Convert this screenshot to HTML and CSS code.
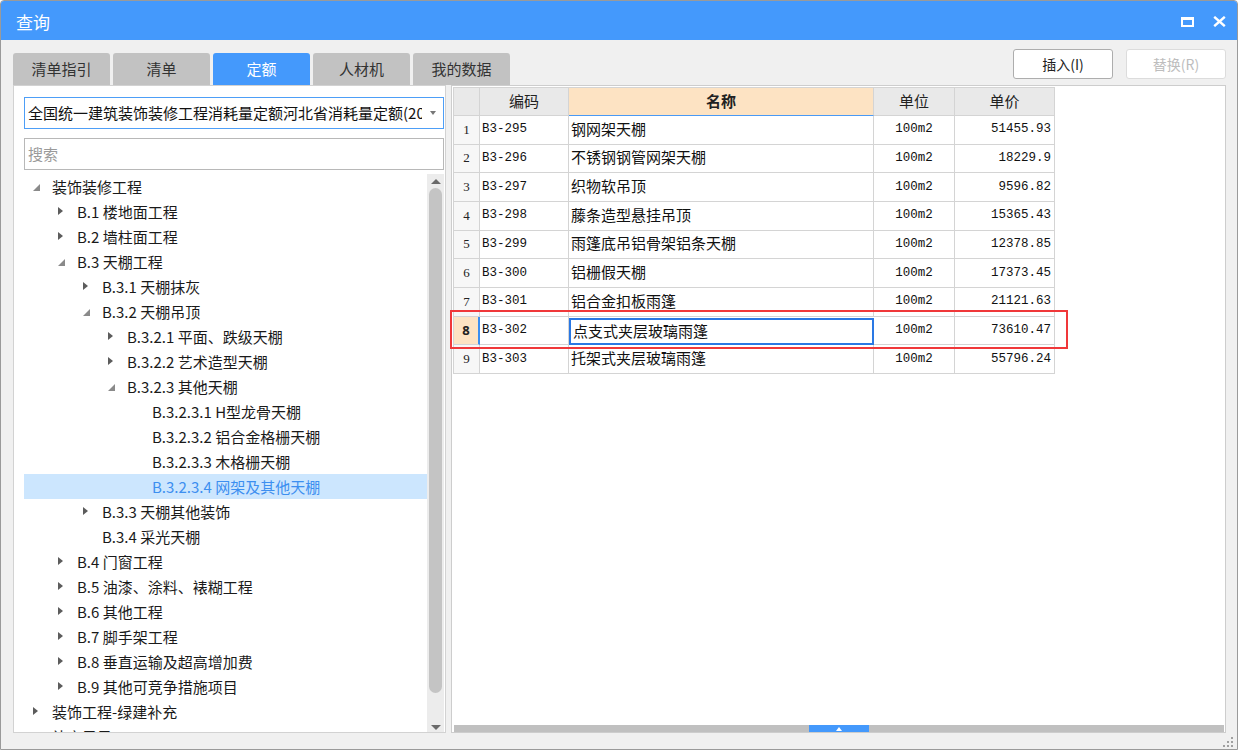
FILE: index.html
```html
<!DOCTYPE html>
<html>
<head>
<meta charset="utf-8">
<title>查询</title>
<link rel="stylesheet" href="styles.css">
</head>
<body>
<div class="window">
  <div class="titlebar">
    <span class="title">查询</span>
    <div class="win-ctrls">
      <svg class="ic-max" width="13" height="10" viewBox="0 0 13 10"><rect x="1" y="1.5" width="11" height="7.5" fill="none" stroke="#fff" stroke-width="2"/><rect x="0" y="0" width="13" height="3" fill="#fff"/></svg>
      <svg class="ic-close" width="13" height="11" viewBox="0 0 13 11"><path d="M1.2 0.8 L11.8 10.2 M11.8 0.8 L1.2 10.2" stroke="#fff" stroke-width="2.4" fill="none"/></svg>
    </div>
  </div>

  <div class="toolbar">
    <div class="tabs">
      <div class="tab">清单指引</div>
      <div class="tab">清单</div>
      <div class="tab active">定额</div>
      <div class="tab">人材机</div>
      <div class="tab">我的数据</div>
    </div>
    <div class="actions">
      <div class="btn">插入(I)</div>
      <div class="btn disabled">替换(R)</div>
    </div>
  </div>

  <div class="content">
    <div class="left">
      <div class="select"><span class="select-text">全国统一建筑装饰装修工程消耗量定额河北省消耗量定额(2012)</span><span class="caret"></span></div>
      <div class="search">搜索</div>
      <div class="tree-wrap">
        <div class="tree">
          <div class="node l0"><span class="tw exp"></span>装饰装修工程</div>
          <div class="node l1"><span class="tw col"></span>B.1 楼地面工程</div>
          <div class="node l1"><span class="tw col"></span>B.2 墙柱面工程</div>
          <div class="node l1"><span class="tw exp"></span>B.3 天棚工程</div>
          <div class="node l2"><span class="tw col"></span>B.3.1 天棚抹灰</div>
          <div class="node l2"><span class="tw exp"></span>B.3.2 天棚吊顶</div>
          <div class="node l3"><span class="tw col"></span>B.3.2.1 平面、跌级天棚</div>
          <div class="node l3"><span class="tw col"></span>B.3.2.2 艺术造型天棚</div>
          <div class="node l3"><span class="tw exp"></span>B.3.2.3 其他天棚</div>
          <div class="node l4"><span class="tw"></span>B.3.2.3.1 H型龙骨天棚</div>
          <div class="node l4"><span class="tw"></span>B.3.2.3.2 铝合金格栅天棚</div>
          <div class="node l4"><span class="tw"></span>B.3.2.3.3 木格栅天棚</div>
          <div class="node l4 selected"><span class="tw"></span>B.3.2.3.4 网架及其他天棚</div>
          <div class="node l2"><span class="tw col"></span>B.3.3 天棚其他装饰</div>
          <div class="node l2"><span class="tw"></span>B.3.4 采光天棚</div>
          <div class="node l1"><span class="tw col"></span>B.4 门窗工程</div>
          <div class="node l1"><span class="tw col"></span>B.5 油漆、涂料、裱糊工程</div>
          <div class="node l1"><span class="tw col"></span>B.6 其他工程</div>
          <div class="node l1"><span class="tw col"></span>B.7 脚手架工程</div>
          <div class="node l1"><span class="tw col"></span>B.8 垂直运输及超高增加费</div>
          <div class="node l1"><span class="tw col"></span>B.9 其他可竞争措施项目</div>
          <div class="node l0"><span class="tw col"></span>装饰工程-绿建补充</div>
          <div class="node l0"><span class="tw"></span>补充子目</div>
        </div>
        <div class="vscroll">
          <span class="arr up"></span>
          <div class="vthumb"></div>
          <span class="arr down"></span>
        </div>
      </div>
    </div>

    <div class="right">
      <div class="grid">
        <div class="row head">
          <div class="c num"></div>
          <div class="c code">编码</div>
          <div class="c name active">名称</div>
          <div class="c unit">单位</div>
          <div class="c price">单价</div>
        </div>
        <div class="row"><div class="c num">1</div><div class="c code">B3-295</div><div class="c name">钢网架天棚</div><div class="c unit">100m2</div><div class="c price">51455.93</div></div>
        <div class="row"><div class="c num">2</div><div class="c code">B3-296</div><div class="c name">不锈钢钢管网架天棚</div><div class="c unit">100m2</div><div class="c price">18229.9</div></div>
        <div class="row"><div class="c num">3</div><div class="c code">B3-297</div><div class="c name">织物软吊顶</div><div class="c unit">100m2</div><div class="c price">9596.82</div></div>
        <div class="row"><div class="c num">4</div><div class="c code">B3-298</div><div class="c name">藤条造型悬挂吊顶</div><div class="c unit">100m2</div><div class="c price">15365.43</div></div>
        <div class="row"><div class="c num">5</div><div class="c code">B3-299</div><div class="c name">雨篷底吊铝骨架铝条天棚</div><div class="c unit">100m2</div><div class="c price">12378.85</div></div>
        <div class="row"><div class="c num">6</div><div class="c code">B3-300</div><div class="c name">铝栅假天棚</div><div class="c unit">100m2</div><div class="c price">17373.45</div></div>
        <div class="row"><div class="c num">7</div><div class="c code">B3-301</div><div class="c name">铝合金扣板雨篷</div><div class="c unit">100m2</div><div class="c price">21121.63</div></div>
        <div class="row current"><div class="c num">8</div><div class="c code">B3-302</div><div class="c name focus">点支式夹层玻璃雨篷</div><div class="c unit">100m2</div><div class="c price">73610.47</div></div>
        <div class="row"><div class="c num">9</div><div class="c code">B3-303</div><div class="c name">托架式夹层玻璃雨篷</div><div class="c unit">100m2</div><div class="c price">55796.24</div></div>
      </div>
      <div class="hscroll"><div class="hthumb"><span class="hup"></span></div></div>
      <div class="highlight"></div>
    </div>
  </div>

  <div class="statusbar">
    <svg class="grip" width="10" height="10" viewBox="0 0 10 10">
      <rect x="8" y="0" width="2" height="2" fill="#a0a0a0"/>
      <rect x="4" y="4" width="2" height="2" fill="#a0a0a0"/><rect x="8" y="4" width="2" height="2" fill="#a0a0a0"/>
      <rect x="0" y="8" width="2" height="2" fill="#a0a0a0"/><rect x="4" y="8" width="2" height="2" fill="#a0a0a0"/><rect x="8" y="8" width="2" height="2" fill="#a0a0a0"/>
    </svg>
  </div>
</div>
</body>
</html>
```

FILE: styles.css
```css
* { box-sizing: border-box; }
html, body { margin: 0; padding: 0; }
body {
  width: 1238px;
  height: 750px;
  overflow: hidden;
  background: #ffffff;
  font-family: "Noto Sans CJK SC", "Noto Sans", sans-serif;
  color: #1a1a1a;
}
.window {
  width: 1238px;
  height: 750px;
  border: 1px solid #9a9a9a;
  border-radius: 4px 4px 0 0;
  background: #f0f0f0;
  display: flex;
  flex-direction: column;
  overflow: hidden;
}
.titlebar {
  height: 39px;
  flex: none;
  background: #4499fc;
  display: flex;
  align-items: center;
  padding: 0 11px 0 15px;
}
.title {
  color: #ffffff;
  font-size: 17px;
  line-height: 20px;
  margin-top: 2px;
}
.win-ctrls {
  margin-left: auto;
  display: flex;
  align-items: center;
  gap: 19px;
  margin-top: 2px;
}
.ic-max, .ic-close { display: block; }

.toolbar {
  flex: none;
  height: 36px;
  margin-top: 9px;
  padding: 0 11px 0 12px;
  display: flex;
  justify-content: space-between;
}
.tabs {
  display: flex;
  align-items: flex-end;
  gap: 3px;
}
.tab {
  width: 97px;
  height: 32px;
  background: #c2c2c2;
  border-radius: 3px 3px 0 0;
  color: #333333;
  font-size: 15px;
  line-height: 32px;
  text-align: center;
}
.tab.active {
  background: #4499fc;
  color: #ffffff;
}
.actions {
  display: flex;
  gap: 13px;
  align-items: flex-start;
}
.btn {
  width: 100px;
  height: 30px;
  border: 1px solid #adadad;
  border-radius: 3px;
  background: #ffffff;
  font-size: 14px;
  line-height: 28px;
  text-align: center;
  color: #222222;
}
.btn.disabled {
  border-color: #dcdcdc;
  color: #bdbdbd;
}

.content {
  flex: none;
  height: 648px;
  padding: 0 11px 0 12px;
  display: flex;
  gap: 5px;
}
.left {
  width: 433px;
  height: 648px;
  background: #ffffff;
  border: 1px solid #d2d2d2;
  padding: 11px 1px 0 10px;
  display: flex;
  flex-direction: column;
}
.select {
  height: 32px;
  border: 1px solid #4d9ef7;
  display: flex;
  align-items: center;
  padding-left: 3px;
  flex: none;
  overflow: hidden;
}
.select-text {
  font-size: 15px;
  line-height: 20px;
  white-space: nowrap;
  overflow: hidden;
  width: 394px;
  color: #111111;
}
.caret {
  margin-left: 8px;
  width: 0;
  height: 0;
  border-left: 3.5px solid transparent;
  border-right: 3.5px solid transparent;
  border-top: 4px solid #777777;
}
.search {
  flex: none;
  margin-top: 9px;
  height: 32px;
  border: 1px solid #b8b8b8;
  padding-left: 3px;
  font-size: 15px;
  line-height: 30px;
  color: #9a9a9a;
}
.tree-wrap {
  margin-top: 4px;
  flex: 1;
  display: flex;
  overflow: hidden;
}
.tree {
  width: 403px;
  overflow: hidden;
}
.node {
  height: 25px;
  display: flex;
  align-items: center;
  font-size: 15px;
  line-height: 25px;
  white-space: nowrap;
  color: #1a1a1a;
}
.node.selected {
  background: #cce6fe;
  color: #3d8ff0;
}
.l0 { padding-left: 8px; }
.l1 { padding-left: 33px; }
.l2 { padding-left: 58px; }
.l3 { padding-left: 83px; }
.l4 { padding-left: 108px; }
.tw {
  width: 20px;
  height: 25px;
  flex: none;
  position: relative;
}
.tw.col::before {
  content: "";
  position: absolute;
  left: 1px;
  top: 8px;
  border-top: 4.5px solid transparent;
  border-bottom: 4.5px solid transparent;
  border-left: 5px solid #5c5c5c;
}
.tw.exp::before {
  content: "";
  position: absolute;
  left: 1px;
  top: 10px;
  border-left: 7px solid transparent;
  border-bottom: 7px solid #8a8a8a;
}
.vscroll {
  width: 17px;
  background: #ececec;
  display: flex;
  flex-direction: column;
  align-items: center;
  padding-top: 5px;
}
.arr {
  width: 0;
  height: 0;
  border-left: 5px solid transparent;
  border-right: 5px solid transparent;
  flex: none;
}
.arr.up { border-bottom: 5px solid #6a6a6a; }
.arr.down { border-top: 5px solid #6a6a6a; margin-top: 32px; }
.vthumb {
  margin-top: 4px;
  width: 13px;
  height: 505px;
  border-radius: 7px;
  background: #c4c4c4;
}

.right {
  width: 775px;
  height: 648px;
  background: #ffffff;
  border: 1px solid #cdcdcd;
  padding: 1px 1px 0 1px;
  display: flex;
  flex-direction: column;
  position: relative;
}
.grid {
  width: 602px;
  border-left: 1px solid #d4d4d4;
  border-top: 1px solid #d4d4d4;
}
.row {
  display: flex;
  height: 28.67px;
}
.row.head { height: 28px; }
.c {
  border-right: 1px solid #d4d4d4;
  border-bottom: 1px solid #d4d4d4;
  height: 100%;
  display: flex;
  align-items: center;
  white-space: nowrap;
  overflow: hidden;
}
.num {
  width: 26px;
  justify-content: center;
  background: #f7f7f7;
  font-family: "Liberation Serif", serif;
  font-size: 13px;
  color: #222222;
}
.code {
  width: 89px;
  padding-left: 2px;
  padding-bottom: 1px;
  font-family: "Liberation Mono", monospace;
  font-size: 12.5px;
  color: #111111;
}
.name {
  width: 305px;
  padding-left: 2px;
  padding-bottom: 3px;
  font-size: 15px;
  color: #111111;
}
.unit {
  width: 81px;
  justify-content: center;
  padding-bottom: 1px;
  font-family: "Liberation Mono", monospace;
  font-size: 12.5px;
  color: #111111;
}
.price {
  width: 100px;
  justify-content: flex-end;
  padding-right: 3px;
  padding-bottom: 1px;
  font-family: "Liberation Mono", monospace;
  font-size: 12.5px;
  color: #111111;
}
.head .c {
  background: #e9e9e9;
  justify-content: center;
  font-family: "Noto Sans CJK SC", sans-serif;
  font-size: 15px;
  color: #222222;
  padding: 0 0 2px 0;
}
.head .name.active {
  background: #fde3c3;
  font-weight: bold;
  border-bottom: 1px solid #4a9af5;
}
.current .num {
  background: #fde3c3;
  font-weight: bold;
  font-family: "Noto Sans", sans-serif;
  font-size: 13px;
  border-right: 2px solid #3a8ef0;
}
.name.focus {
  border: 2px solid #2a78e4;
  margin-top: 1px;
  padding-bottom: 2px;
  height: calc(100% - 1px);
}
.hscroll {
  margin-top: auto;
  margin-left: 1px;
  height: 7px;
  background: #c0c0c0;
  position: relative;
}
.hthumb {
  position: absolute;
  left: 355px;
  top: 0;
  width: 60px;
  height: 7px;
  background: #4499fc;
  display: flex;
  justify-content: center;
  align-items: center;
}
.hup {
  width: 0;
  height: 0;
  border-left: 3px solid transparent;
  border-right: 3px solid transparent;
  border-bottom: 4px solid #ffffff;
}
.highlight {
  position: absolute;
  left: -2px;
  top: 224px;
  width: 618px;
  height: 39px;
  border: 2px solid #f0383a;
  pointer-events: none;
}

.statusbar {
  flex: 1;
  display: flex;
  justify-content: flex-end;
  align-items: flex-end;
  padding: 0 4px 2px 0;
}
.grip { display: block; }
```
